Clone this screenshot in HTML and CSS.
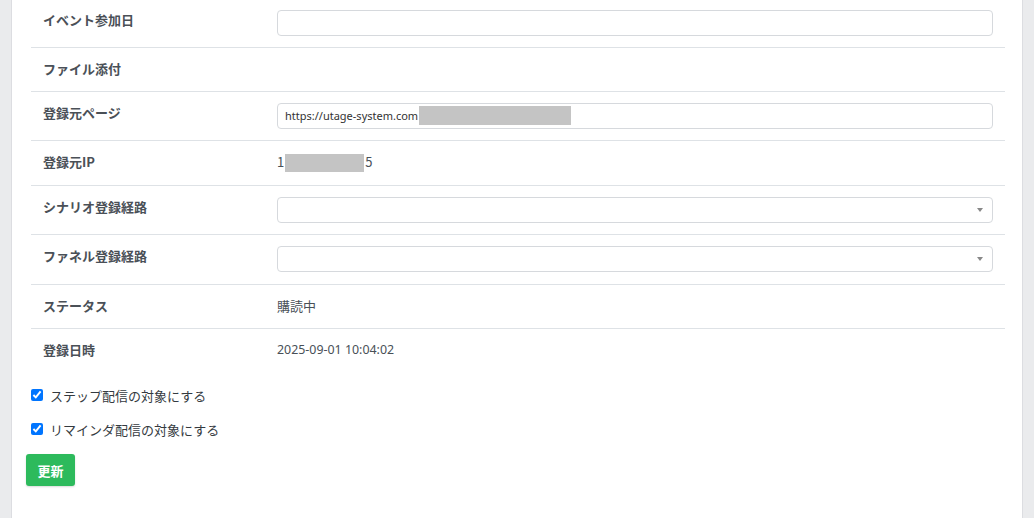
FILE: index.html
```html
<!DOCTYPE html>
<html lang="ja">
<head>
<meta charset="utf-8">
<link rel="stylesheet" href="styles.css">
</head>
<body>
<div class="card">
  <table class="detail">
    <tr class="first">
      <th>イベント参加日</th>
      <td><div class="control"></div></td>
    </tr>
    <tr>
      <th>ファイル添付</th>
      <td></td>
    </tr>
    <tr>
      <th>登録元ページ</th>
      <td><div class="control url">https://utage-system.com<span class="redact redact-url"></span></div></td>
    </tr>
    <tr>
      <th>登録元IP</th>
      <td class="plain">1<span class="redact redact-ip"></span>5</td>
    </tr>
    <tr>
      <th>シナリオ登録経路</th>
      <td><div class="control select"><span class="arrow"></span></div></td>
    </tr>
    <tr>
      <th>ファネル登録経路</th>
      <td><div class="control select"><span class="arrow"></span></div></td>
    </tr>
    <tr>
      <th>ステータス</th>
      <td class="plain">購読中</td>
    </tr>
    <tr class="last">
      <th>登録日時</th>
      <td class="plain date">2025-09-01 10:04:02</td>
    </tr>
  </table>

  <div class="checks">
    <label class="check"><input type="checkbox" checked><span>ステップ配信の対象にする</span></label>
    <label class="check"><input type="checkbox" checked><span>リマインダ配信の対象にする</span></label>
  </div>

  <button class="btn-update" type="button">更新</button>
</div>
</body>
</html>
```
FILE: styles.css
```css
html, body {
  margin: 0;
  padding: 0;
}
body {
  background: #eaebed;
  font-family: "Noto Sans", "Noto Sans CJK JP", sans-serif;
  color: #495057;
  min-height: 100vh;
}
.card {
  box-sizing: border-box;
  margin-left: 11px;
  width: 1012px;
  min-height: 100vh;
  background: #fff;
  border-left: 1px solid #dcdde1;
  border-right: 1px solid #dcdde1;
  padding: 0 12px 30px 14px;
}
.detail {
  border-collapse: collapse;
  width: calc(100% - 10px);
  margin: 0 5px;
}
.detail th,
.detail td {
  padding: 11px 12px 11.67px 12px;
  vertical-align: top;
  border-bottom: 1px solid #dee2e6;
  line-height: 20px;
  font-size: 13px;
  text-align: left;
}
.detail tr.first th,
.detail tr.first td {
  padding-top: 9.5px;
}
.detail tr.last th,
.detail tr.last td {
  border-bottom: none;
}
.detail th {
  width: 210px;
  font-weight: 700;
  color: #4a5057;
  font-family: "Noto Sans CJK JP", sans-serif;
}
.detail td.plain {
  color: #495057;
  font-family: "Noto Sans CJK JP", sans-serif;
}
.detail td.date {
  font-family: "Noto Sans", "Noto Sans CJK JP", sans-serif;
  font-size: 12.4px;
}
.control {
  box-sizing: border-box;
  height: 26px;
  border: 1px solid #d6d9dd;
  border-radius: 4px;
  background: #fff;
  position: relative;
}
.control.url {
  display: flex;
  align-items: center;
  padding-left: 7px;
  font-size: 11px;
  color: #333;
  font-family: "Noto Sans", sans-serif;
  white-space: nowrap;
}
.redact {
  display: inline-block;
  background: #c4c4c4;
  vertical-align: middle;
}
.redact-url {
  width: 152px;
  height: 19px;
  margin-left: 1px;
}
.redact-ip {
  width: 79px;
  height: 18px;
  margin: 0 1px 0 1px;
  position: relative;
  top: -1px;
}
.control.select .arrow {
  position: absolute;
  right: 9px;
  top: 10px;
  width: 0;
  height: 0;
  border-style: solid;
  border-width: 4px 3px 0 3px;
  border-color: #888 transparent transparent transparent;
}
.checks {
  margin: 14px 5px 0 5px;
  display: flex;
  flex-direction: column;
  gap: 14px;
}
.check {
  display: flex;
  align-items: center;
  height: 20px;
  font-size: 13px;
  color: #343a40;
  font-family: "Noto Sans CJK JP", sans-serif;
}
.check input {
  width: 12px;
  height: 12px;
  margin: 0 7px 0 0;
}
.btn-update {
  margin-top: 15px;
  width: 49px;
  height: 32px;
  background: #2dba5c;
  color: #fff;
  border: none;
  border-radius: 3px;
  font-family: "Noto Sans CJK JP", sans-serif;
  font-weight: 700;
  font-size: 13px;
  padding: 0;
  box-shadow: 0 1px 2px rgba(0,0,0,0.15);
}
```
